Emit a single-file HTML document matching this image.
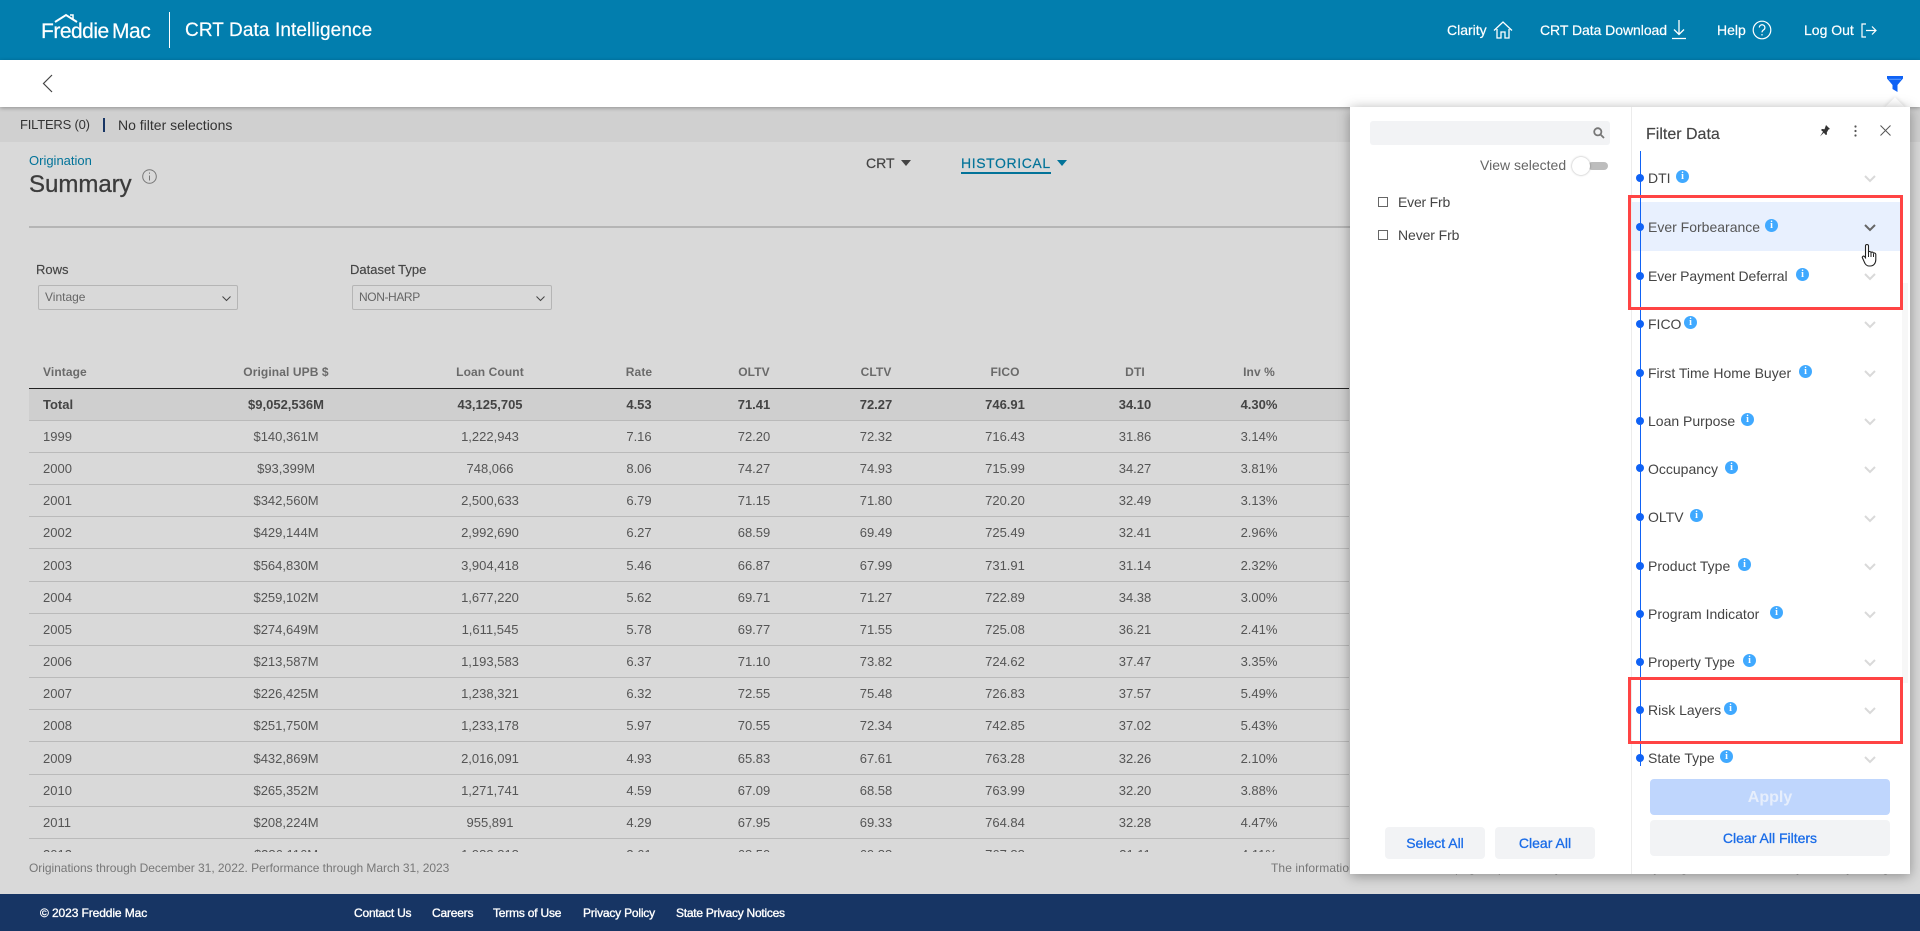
<!DOCTYPE html>
<html lang="en"><head><meta charset="utf-8"><title>CRT Data Intelligence</title>
<style>
*{box-sizing:border-box}
html,body{margin:0;padding:0;width:1920px;height:931px;overflow:hidden;background:#d9d9d9;font-family:"Liberation Sans",sans-serif;color:#444}
.a{position:absolute}
.t{position:absolute;white-space:nowrap;line-height:16px;height:16px;margin-top:-8px}
#hd{left:0;top:0;width:1920px;height:60px;background:#027eae}
#hd .t{color:#fff;font-size:14px;-webkit-text-stroke:.2px #fff}
#bar{left:0;top:60px;width:1920px;height:47px;background:#fff;box-shadow:0 1px 4px rgba(0,0,0,.3);z-index:2}
#fb{left:0;top:107px;width:1920px;height:35px;background:#d0d0d0}
#ft{left:0;top:894px;width:1920px;height:37px;background:#173564;z-index:6}
#ft .t{color:#fff;font-size:12px;font-weight:400;-webkit-text-stroke:.35px #fff;top:19px;letter-spacing:-.1px}
#tbl{left:0;top:360px;width:1350px;height:492px;overflow:hidden}
.r{position:absolute;left:29px;width:1320px;height:33px;border-bottom:1px solid #bababa;font-size:13px;color:#555}
.r span{position:absolute;top:9px;line-height:15px;white-space:nowrap;transform:translateX(-50%)}
.r span:nth-child(1){left:14px;transform:none}
.r span:nth-child(2){left:257px}
.r span:nth-child(3){left:461px}
.r span:nth-child(4){left:610px}
.r span:nth-child(5){left:725px}
.r span:nth-child(6){left:847px}
.r span:nth-child(7){left:976px}
.r span:nth-child(8){left:1106px}
.r span:nth-child(9){left:1230px}
.sel{background:#d9d9d9;border:1px solid #b5b5b5;border-radius:2px;height:25px;width:200px;top:285px;font-size:12px;color:#666;line-height:23px;padding-left:6px}
#panel{left:1350px;top:107px;width:560px;height:767px;background:#fff;box-shadow:0 2px 12px rgba(0,0,0,.35);z-index:4}
#panel .t{color:#444}
#caret{left:1888px;top:100px;width:14px;height:14px;background:#fff;transform:rotate(45deg);z-index:3;box-shadow:0 0 4px rgba(0,0,0,.15)}
.item{font-size:14px;left:298px;color:#444}
.dot{position:absolute;left:286px;width:8px;height:8px;margin-top:-4px;border-radius:50%;background:#0f62f5}
.inf{position:absolute;width:13px;height:13px;margin-top:-8px;border-radius:50%;background:#40a9ff;color:#fff;font:700 10px/13px "Liberation Serif",serif;text-align:center}
.chev{position:absolute;left:514px;margin-top:-4px}
.btn{position:absolute;background:#f2f3f5;border-radius:4px;color:#1a6ce8;font-size:14px;font-weight:700;text-align:center}
.cb{position:absolute;left:28px;width:10px;height:10px;border:1px solid #666;margin-top:-5px}
.red{position:absolute;border:3px solid #ff4444;left:278px;width:275px;z-index:5}
</style></head><body>

<div class="a" id="hd">
<svg class="a" style="left:42px;top:12px" width="110" height="30" viewBox="0 0 110 30"><path d="M13 10 L24 3 L35 10" fill="none" stroke="#fff" stroke-width="2"/><path d="M28 3h3v4" fill="none" stroke="#fff" stroke-width="1.5"/></svg>
<span class="t" style="left:41px;top:32px;font-size:21px;letter-spacing:-.5px;word-spacing:-2px;line-height:20px;height:20px;margin-top:-10px">Freddie Mac</span>
<div class="a" style="left:169px;top:12px;width:1px;height:36px;background:#fff"></div>
<span class="t" style="left:185px;top:31px;font-size:19px;line-height:20px;height:20px;margin-top:-10px;letter-spacing:.1px">CRT Data Intelligence</span>
<span class="t" style="left:1447px;top:30px">Clarity</span>
<svg class="a" style="left:1493px;top:21px" width="20" height="18" viewBox="0 0 20 18" fill="none" stroke="#fff" stroke-width="1.3"><path d="M1 9.5 10 1l9 8.500M4 8v9h4v-6h4v6h4V8"/></svg>
<span class="t" style="left:1540px;top:30px;letter-spacing:-.05px">CRT Data Download</span>
<svg class="a" style="left:1671px;top:20px" width="16" height="20" viewBox="0 0 16 20" fill="none" stroke="#fff" stroke-width="1.3"><path d="M8 0v14M3 9.500l5 5 5-5M1 18.500h14"/></svg>
<span class="t" style="left:1717px;top:30px">Help</span>
<svg class="a" style="left:1752px;top:20px" width="20" height="20" viewBox="0 0 20 20" fill="none" stroke="#fff" stroke-width="1.200"><circle cx="10" cy="10" r="8.800"/><path d="M7.300 7.500a2.800 2.800 0 1 1 4.300 2.400c-1 .7-1.600 1.200-1.600 2.500"/><path d="M10 14v1.500"/></svg>
<span class="t" style="left:1804px;top:30px">Log Out</span>
<svg class="a" style="left:1861px;top:23px" width="16" height="15" viewBox="0 0 16 15" fill="none" stroke="#fff" stroke-width="1.200"><path d="M5 1H1v13h4M5 7.500h10M11 3.500l4 4-4 4"/></svg>
</div>

<div class="a" id="bar">
<svg class="a" style="left:42px;top:14px" width="11" height="19" viewBox="0 0 11 19" fill="none" stroke="#444" stroke-width="1.200"><path d="M10 1 1.500 9.500 10 18"/></svg>
<svg class="a" style="left:1887px;top:16px" width="16" height="16" viewBox="0 0 16 16"><path d="M0 0h16v2.500L10.500 9v7l-5-3V9L0 2.500z" fill="#0f62f5"/><path d="M2 3.300h12" stroke="#5a9bff" stroke-width="1"/></svg>
</div>

<div class="a" id="fb">
<span class="t" style="left:20px;top:18px;font-size:13px;color:#333;letter-spacing:-.2px">FILTERS (0)</span>
<div class="a" style="left:103px;top:11px;width:1.500px;height:14px;background:#173564"></div>
<span class="t" style="left:118px;top:18px;font-size:14px;color:#333">No filter selections</span>
</div>

<span class="t" style="left:29px;top:161px;font-size:13px;color:#027399">Origination</span>
<span class="t" style="left:29px;top:185px;font-size:24px;color:#3c3c3c;line-height:28px;height:28px;margin-top:-14px;-webkit-text-stroke:.3px #3c3c3c">Summary</span>
<svg class="a" style="left:142px;top:169px" width="15" height="15" viewBox="0 0 15 15" fill="none" stroke="#777"><circle cx="7.500" cy="7.500" r="6.800"/><path d="M7.500 6.500v5M7.500 3.500v1.300"/></svg>
<span class="t" style="left:866px;top:163px;font-size:14px;color:#444;-webkit-text-stroke:.2px #444">CRT</span>
<svg class="a" style="left:901px;top:160px" width="10" height="6"><path d="M0 0h10L5 6z" fill="#444"/></svg>
<span class="t" style="left:961px;top:163px;font-size:14px;color:#027399;letter-spacing:.6px;-webkit-text-stroke:.2px #027399">HISTORICAL</span>
<svg class="a" style="left:1057px;top:160px" width="10" height="6"><path d="M0 0h10L5 6z" fill="#027399"/></svg>
<div class="a" style="left:961px;top:172px;width:90px;height:2px;background:#027399"></div>
<div class="a" style="left:29px;top:226px;width:1321px;height:2px;background:#b5b5b5"></div>

<span class="t" style="left:36px;top:270px;font-size:13px;color:#444;-webkit-text-stroke:.15px #444">Rows</span>
<span class="t" style="left:350px;top:270px;font-size:13px;color:#444;-webkit-text-stroke:.15px #444">Dataset Type</span>
<div class="a sel" style="left:38px">Vintage<svg class="a" style="right:6px;top:10px" width="9" height="6" fill="none" stroke="#444"><path d="M.5.500l4 4 4-4"/></svg></div>
<div class="a sel" style="left:352px;letter-spacing:-.4px">NON-HARP<svg class="a" style="right:6px;top:10px" width="9" height="6" fill="none" stroke="#444"><path d="M.5.500l4 4 4-4"/></svg></div>

<div class="a" id="tbl">
<div class="r" style="top:0;height:29px;border-bottom:1px solid #222;color:#6a6a6a;font-weight:700;font-size:12px;letter-spacing:.1px"><span style="top:5px">Vintage</span><span style="top:5px">Original UPB $</span><span style="top:5px">Loan Count</span><span style="top:5px">Rate</span><span style="top:5px">OLTV</span><span style="top:5px">CLTV</span><span style="top:5px">FICO</span><span style="top:5px">DTI</span><span style="top:5px">Inv %</span></div>
<div class="r" style="top:29px;background:#cfcfcf;left:29px;color:#444;font-weight:700;font-size:13px;height:32px"><span style="top:8px">Total</span><span style="top:8px">$9,052,536M</span><span style="top:8px">43,125,705</span><span style="top:8px">4.53</span><span style="top:8px">71.41</span><span style="top:8px">72.27</span><span style="top:8px">746.91</span><span style="top:8px">34.10</span><span style="top:8px">4.30%</span></div>
<div class="r" style="top:60px"><span>1999</span><span>$140,361M</span><span>1,222,943</span><span>7.16</span><span>72.20</span><span>72.32</span><span>716.43</span><span>31.86</span><span>3.14%</span></div>
<div class="r" style="top:92.150px"><span>2000</span><span>$93,399M</span><span>748,066</span><span>8.06</span><span>74.27</span><span>74.93</span><span>715.99</span><span>34.27</span><span>3.81%</span></div>
<div class="r" style="top:124.300px"><span>2001</span><span>$342,560M</span><span>2,500,633</span><span>6.79</span><span>71.15</span><span>71.80</span><span>720.20</span><span>32.49</span><span>3.13%</span></div>
<div class="r" style="top:156.450px"><span>2002</span><span>$429,144M</span><span>2,992,690</span><span>6.27</span><span>68.59</span><span>69.49</span><span>725.49</span><span>32.41</span><span>2.96%</span></div>
<div class="r" style="top:188.600px"><span>2003</span><span>$564,830M</span><span>3,904,418</span><span>5.46</span><span>66.87</span><span>67.99</span><span>731.91</span><span>31.14</span><span>2.32%</span></div>
<div class="r" style="top:220.750px"><span>2004</span><span>$259,102M</span><span>1,677,220</span><span>5.62</span><span>69.71</span><span>71.27</span><span>722.89</span><span>34.38</span><span>3.00%</span></div>
<div class="r" style="top:252.900px"><span>2005</span><span>$274,649M</span><span>1,611,545</span><span>5.78</span><span>69.77</span><span>71.55</span><span>725.08</span><span>36.21</span><span>2.41%</span></div>
<div class="r" style="top:285.050px"><span>2006</span><span>$213,587M</span><span>1,193,583</span><span>6.37</span><span>71.10</span><span>73.82</span><span>724.62</span><span>37.47</span><span>3.35%</span></div>
<div class="r" style="top:317.200px"><span>2007</span><span>$226,425M</span><span>1,238,321</span><span>6.32</span><span>72.55</span><span>75.48</span><span>726.83</span><span>37.57</span><span>5.49%</span></div>
<div class="r" style="top:349.350px"><span>2008</span><span>$251,750M</span><span>1,233,178</span><span>5.97</span><span>70.55</span><span>72.34</span><span>742.85</span><span>37.02</span><span>5.43%</span></div>
<div class="r" style="top:381.500px"><span>2009</span><span>$432,869M</span><span>2,016,091</span><span>4.93</span><span>65.83</span><span>67.61</span><span>763.28</span><span>32.26</span><span>2.10%</span></div>
<div class="r" style="top:413.650px"><span>2010</span><span>$265,352M</span><span>1,271,741</span><span>4.59</span><span>67.09</span><span>68.58</span><span>763.99</span><span>32.20</span><span>3.88%</span></div>
<div class="r" style="top:445.800px"><span>2011</span><span>$208,224M</span><span>955,891</span><span>4.29</span><span>67.95</span><span>69.33</span><span>764.84</span><span>32.28</span><span>4.47%</span></div>
<div class="r" style="top:477.950px"><span>2012</span><span>$386,116M</span><span>1,988,818</span><span>3.61</span><span>68.50</span><span>69.88</span><span>767.88</span><span>31.11</span><span>4.11%</span></div>
</div>

<span class="t" style="left:29px;top:868px;font-size:12px;color:#777;letter-spacing:-.035px">Originations through December 31, 2022. Performance through March 31, 2023</span>
<span class="t" style="left:1271px;top:868px;font-size:12px;color:#777;letter-spacing:.1px">The information contained on this page is provided by Freddie Mac for your general reference only and may change</span>

<div class="a" id="caret"></div>
<div class="a" id="panel">
<div class="a" style="left:20px;top:14px;width:240px;height:24px;background:#f2f3f5;border-radius:3px"></div>
<svg class="a" style="left:243px;top:20px" width="12" height="12" viewBox="0 0 12 12" fill="none" stroke="#777" stroke-width="1.800"><circle cx="4.800" cy="4.800" r="3.600"/><path d="M7.500 7.500 11 11"/></svg>
<span class="t" style="left:130px;top:58px;font-size:14px;color:#666">View selected</span>
<div class="a" style="left:238px;top:55px;width:20px;height:8px;border-radius:4px;background:#bdbdbd"></div>
<div class="a" style="left:222px;top:50px;width:18px;height:18px;border-radius:50%;background:#fff;box-shadow:0 0 2px rgba(0,0,0,.35)"></div>
<div class="cb" style="top:95px"></div><span class="t" style="left:48px;top:95px;font-size:14px;letter-spacing:-.2px">Ever Frb</span>
<div class="cb" style="top:128px"></div><span class="t" style="left:48px;top:128px;font-size:14px;letter-spacing:-.1px">Never Frb</span>
<div class="btn" style="left:35px;top:720px;width:100px;height:32px;line-height:32px;font-weight:400;-webkit-text-stroke:.3px #1a6ce8">Select All</div>
<div class="btn" style="left:145px;top:720px;width:100px;height:32px;line-height:32px;font-weight:400;-webkit-text-stroke:.3px #1a6ce8">Clear All</div>
<div class="a" style="left:281px;top:0;width:1px;height:767px;background:#ececec"></div>

<span class="t" style="left:296px;top:28px;font-size:16px;line-height:18px;height:18px;margin-top:-9px;-webkit-text-stroke:.15px #444">Filter Data</span>
<svg class="a" style="left:469px;top:17px" width="12" height="14" viewBox="0 0 12 14"><path d="M7 1l4 4-1.500.5L7.800 8.500 8 10.500 6.800 11 4.800 8.800 1 12.500 4 7.800 2 6l1-1 2.500.3L6.500 2.500z" fill="#333"/></svg>
<svg class="a" style="left:504px;top:18px" width="3" height="12"><circle cx="1.500" cy="1.500" r="1.100" fill="#555"/><circle cx="1.500" cy="6" r="1.100" fill="#555"/><circle cx="1.500" cy="10.500" r="1.100" fill="#555"/></svg>
<svg class="a" style="left:530px;top:18px" width="11" height="11" viewBox="0 0 11 11" stroke="#555" stroke-width="1"><path d="M.5.500l10 10M10.500.500l-10 10"/></svg>

<div class="a" style="left:282px;top:95px;width:268px;height:49px;background:#e8f0fe"></div>
<div class="a" style="left:552px;top:176px;width:6px;height:400px;background:#f7f7f7"></div>
<div class="a" style="left:290px;top:44px;width:1px;height:615px;background:#0f62f5"></div>

<div class="dot" style="top:71px"></div><span class="t item" style="top:71px">DTI</span><i class="inf" style="left:326px;top:71px">i</i>
<div class="dot" style="top:120px"></div><span class="t item" style="top:120px;color:#555">Ever Forbearance</span><i class="inf" style="left:415px;top:120px">i</i>
<div class="dot" style="top:169px"></div><span class="t item" style="top:169px;letter-spacing:-.1px">Ever Payment Deferral</span><i class="inf" style="left:446px;top:169px">i</i>
<div class="dot" style="top:217px"></div><span class="t item" style="top:217px">FICO</span><i class="inf" style="left:334px;top:217px">i</i>
<div class="dot" style="top:266px"></div><span class="t item" style="top:266px">First Time Home Buyer</span><i class="inf" style="left:449px;top:266px">i</i>
<div class="dot" style="top:314px"></div><span class="t item" style="top:314px">Loan Purpose</span><i class="inf" style="left:391px;top:314px">i</i>
<div class="dot" style="top:361px"></div><span class="t item" style="top:362px">Occupancy</span><i class="inf" style="left:375px;top:362px">i</i>
<div class="dot" style="top:410px"></div><span class="t item" style="top:410px">OLTV</span><i class="inf" style="left:340px;top:410px">i</i>
<div class="dot" style="top:459px"></div><span class="t item" style="top:459px">Product Type</span><i class="inf" style="left:388px;top:459px">i</i>
<div class="dot" style="top:507px"></div><span class="t item" style="top:507px">Program Indicator</span><i class="inf" style="left:420px;top:507px">i</i>
<div class="dot" style="top:555px"></div><span class="t item" style="top:555px">Property Type</span><i class="inf" style="left:393px;top:555px">i</i>
<div class="dot" style="top:603px"></div><span class="t item" style="top:603px">Risk Layers</span><i class="inf" style="left:374px;top:603px">i</i>
<div class="dot" style="top:651px"></div><span class="t item" style="top:651px">State Type</span><i class="inf" style="left:370px;top:651px">i</i>

<svg class="chev" style="top:72px" width="12" height="8" fill="none" stroke="#d9d9d9" stroke-width="2"><path d="M1 1l5 5 5-5"/></svg>
<svg class="chev" style="top:121px" width="12" height="8" fill="none" stroke="#666" stroke-width="2"><path d="M1 1l5 5 5-5"/></svg>
<svg class="chev" style="top:170px" width="12" height="8" fill="none" stroke="#d9d9d9" stroke-width="2"><path d="M1 1l5 5 5-5"/></svg>
<svg class="chev" style="top:218px" width="12" height="8" fill="none" stroke="#d9d9d9" stroke-width="2"><path d="M1 1l5 5 5-5"/></svg>
<svg class="chev" style="top:267px" width="12" height="8" fill="none" stroke="#d9d9d9" stroke-width="2"><path d="M1 1l5 5 5-5"/></svg>
<svg class="chev" style="top:315px" width="12" height="8" fill="none" stroke="#d9d9d9" stroke-width="2"><path d="M1 1l5 5 5-5"/></svg>
<svg class="chev" style="top:363px" width="12" height="8" fill="none" stroke="#d9d9d9" stroke-width="2"><path d="M1 1l5 5 5-5"/></svg>
<svg class="chev" style="top:412px" width="12" height="8" fill="none" stroke="#d9d9d9" stroke-width="2"><path d="M1 1l5 5 5-5"/></svg>
<svg class="chev" style="top:460px" width="12" height="8" fill="none" stroke="#d9d9d9" stroke-width="2"><path d="M1 1l5 5 5-5"/></svg>
<svg class="chev" style="top:508px" width="12" height="8" fill="none" stroke="#d9d9d9" stroke-width="2"><path d="M1 1l5 5 5-5"/></svg>
<svg class="chev" style="top:556px" width="12" height="8" fill="none" stroke="#d9d9d9" stroke-width="2"><path d="M1 1l5 5 5-5"/></svg>
<svg class="chev" style="top:604px" width="12" height="8" fill="none" stroke="#d9d9d9" stroke-width="2"><path d="M1 1l5 5 5-5"/></svg>
<svg class="chev" style="top:653px" width="12" height="8" fill="none" stroke="#d9d9d9" stroke-width="2"><path d="M1 1l5 5 5-5"/></svg>

<div class="btn" style="left:300px;top:672px;width:240px;height:36px;line-height:38px;background:#bfd6fd;color:#e6eefc;font-size:16px">Apply</div>
<div class="btn" style="left:300px;top:713px;width:240px;height:36px;line-height:36px;font-weight:400;-webkit-text-stroke:.3px #1a6ce8">Clear All Filters</div>

<div class="red" style="top:88px;height:115px"></div>
<div class="red" style="top:570px;height:67px"></div>
<svg class="a" style="left:511px;top:136px;z-index:6" width="18" height="24" viewBox="0 0 18 24"><path d="M6 1.500c1 0 1.500.6 1.500 1.500v6c.5-.8 2.300-.7 2.500.5.500-.7 2.200-.6 2.500.7.700-.5 2.300-.2 2.300 1.300v5c0 3.500-2 6.500-5.500 6.500H8c-2 0-3-1-4-2.500L1.500 15c-.7-1.200.8-2.500 2-1.500l1 1.200V3c0-.9.5-1.500 1.500-1.500z" fill="#fff" stroke="#222" stroke-width="1.100"/><path d="M7.500 9v5M10 9.500V14M12.500 11v3" stroke="#222" fill="none"/></svg>
</div>

<div class="a" id="ft">
<span class="t" style="left:40px">© 2023 Freddie Mac</span>
<span class="t" style="left:354px;letter-spacing:-.2px">Contact Us</span>
<span class="t" style="left:432px;letter-spacing:-.2px">Careers</span>
<span class="t" style="left:493px;letter-spacing:-.2px">Terms of Use</span>
<span class="t" style="left:583px;letter-spacing:-.2px">Privacy Policy</span>
<span class="t" style="left:676px;letter-spacing:-.25px">State Privacy Notices</span>
</div>
</body></html>
